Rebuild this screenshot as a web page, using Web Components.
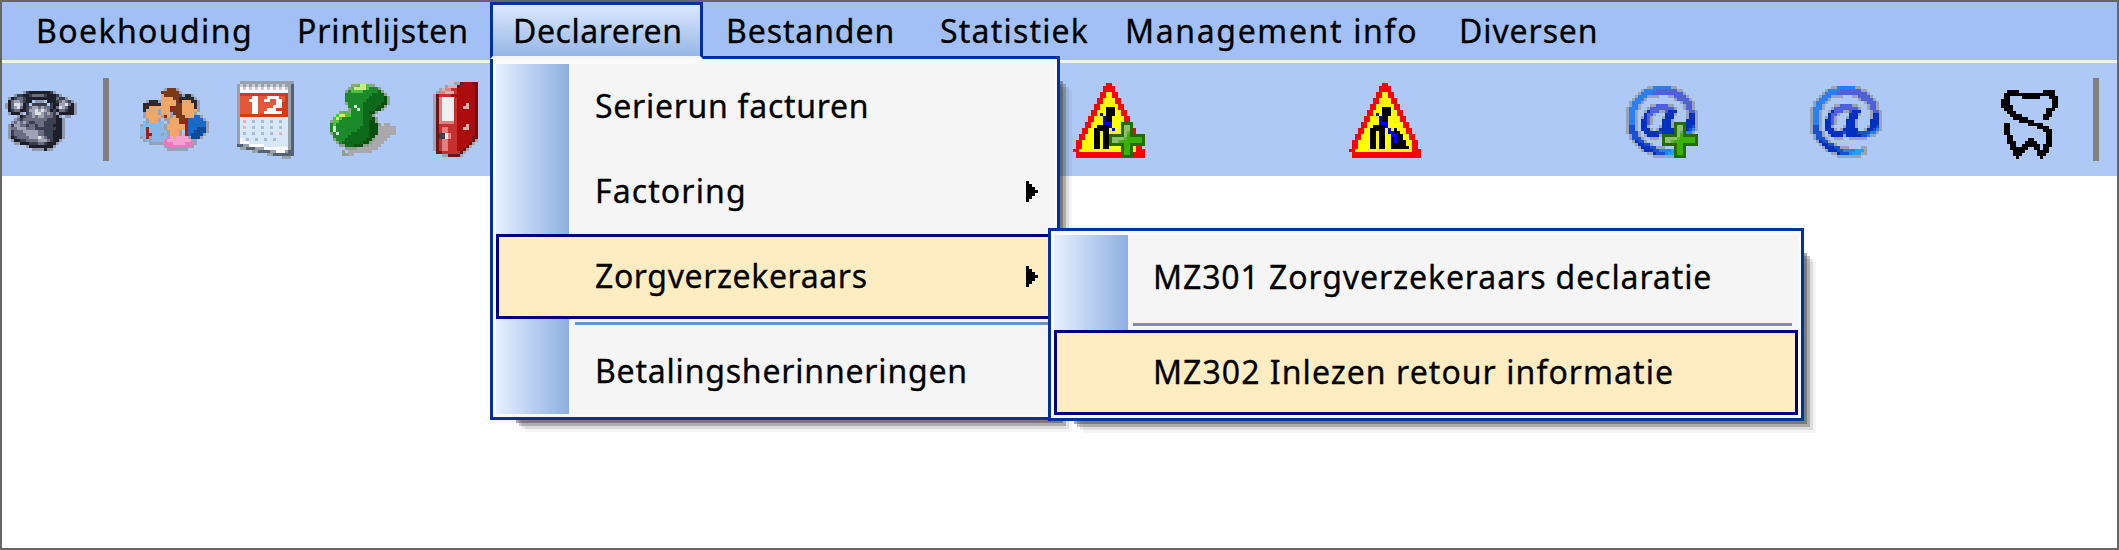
<!DOCTYPE html>
<html>
<head>
<meta charset="utf-8">
<title>Declareren</title>
<style>
  html, body { margin: 0; padding: 0; background: #fff; overflow: hidden; }
</style>
</head>
<body>
<app-window>
  <menu-bar>
    <menu-title style="width:261px;letter-spacing:1.4px">Boekhouding</menu-title>
    <menu-title style="width:216px;letter-spacing:.85px">Printlijsten</menu-title>
    <menu-title style="width:213px;letter-spacing:.55px" open>Declareren</menu-title>
    <menu-title style="width:214px;letter-spacing:.9px">Bestanden</menu-title>
    <menu-title style="width:185px;letter-spacing:1.2px">Statistiek</menu-title>
    <menu-title style="width:334px;letter-spacing:1.65px">Management info</menu-title>
    <menu-title style="width:200px;letter-spacing:.9px">Diversen</menu-title>
  </menu-bar>
  <tool-bar>
    <tool-btn style="width:78px;margin-top:3px"><pix-icon name="phone"></pix-icon></tool-btn>
    <tool-sep style="width:52px"></tool-sep>
    <tool-btn style="width:82px"><pix-icon name="people"></pix-icon></tool-btn>
    <tool-btn style="width:106px"><pix-icon name="calendar"></pix-icon></tool-btn>
    <tool-btn style="width:86px"><pix-icon name="pin"></pix-icon></tool-btn>
    <tool-btn style="width:98px"><pix-icon name="binder"></pix-icon></tool-btn>
    <tool-btn style="width:98px;margin:2px 0 0 556px"><pix-icon name="roadplus" plus></pix-icon></tool-btn>
    <tool-btn style="width:98px;margin:2px 0 0 178px"><pix-icon name="road"></pix-icon></tool-btn>
    <tool-btn style="width:98px;margin:4px 0 0 179px"><pix-icon name="at" plus></pix-icon></tool-btn>
    <tool-btn style="width:98px;margin:4px 0 0 86px"><pix-icon name="at"></pix-icon></tool-btn>
    <tool-btn style="width:98px;margin:10px 0 0 84px"><pix-icon name="tooth"></pix-icon></tool-btn>
    <tool-sep style="width:37px"></tool-sep>
  </tool-bar>

  <popup-menu style="left:488px;top:54px;width:570px" gutter="73">
    <menu-item style="margin-top:1px;letter-spacing:.7px">Serierun facturen</menu-item>
    <menu-item style="letter-spacing:1.1px" arrow>Factoring</menu-item>
    <menu-item style="letter-spacing:.6px" arrow active>Zorgverzekeraars</menu-item>
    <menu-sep></menu-sep>
    <menu-item style="letter-spacing:.8px">Betalingsherinneringen</menu-item>
  </popup-menu>

  <popup-menu style="left:1046px;top:226px;width:756px" gutter="74">
    <menu-item style="letter-spacing:.9px">MZ301 Zorgverzekeraars declaratie</menu-item>
    <menu-sep></menu-sep>
    <menu-item style="letter-spacing:1.05px" active>MZ302 Inlezen retour informatie</menu-item>
  </popup-menu>
</app-window>

<script>
const FONT = '"Noto Sans", "Open Sans", sans-serif';

const PLUS_PAL = { D: '#266a00', L: '#8cc070', G: '#3ab000', M: '#5fae3c' };
const PLUS = [
  '....DDDD....',
  '....DLLD....',
  '....DLLD....',
  '....DLMD....',
  'DDDDDLGDDDDD',
  'DLLLLMGGGGGD',
  'DLLMGGGGGGGD',
  'DDDDDGGDDDDD',
  '....DGGD....',
  '....DGGD....',
  '....DGGD....',
  '....DDDD....'
];

const ROAD_PAL = { r: '#ff0000', y: '#ffff00', k: '#000000', b: '#0000ff' };

const ICONS = {
  phone: {
    pal: { k: '#1c1e2a', d: '#3c3f50', m: '#6b6e80', l: '#a0a3b4', w: '#dcdee8', g: '#8f98ac' },
    rows: [
      '......gdkkkkkkkdg.......',
      '...gddkkdmmmmdkkkdg.....',
      '.gkdmmdkkkkkkkkkkmddg...',
      '.kmllmdkk.ggg.kkkdmlmdg.',
      'gkmwwlkd.ddddd.dkkllwmkg',
      'gkmlwmkdmllmlmmdkmwlmkkg',
      '.kdmmkkdllwlwlmkdkmmdkkg',
      '.gkkkg.dmlwwlmlmdgkkkkkg',
      '....gkdmmlmllmmmdkg.gg..',
      '...gmdmmmmmmmmdddkkg....',
      '..gmlmlmddmmmddddkkg....',
      '.gdllmmdmmdmmdddkkkg....',
      '.gmmlllmmmdddddddkkg....',
      '.gdmmmlllllmmdddkkkg....',
      '.gdmmmmllllmmdddkkkg....',
      '.gkdmmmmlllwlmddkkkg....',
      '..gkkddmmmmlllmdkkg.....',
      '...ggkkkdddmmdkkkg......',
      '.......gkkkkkkkkg.......',
      '.........ggggkgg........'
    ]
  },
  people: {
    pal: { s: '#f0a868', b: '#7a3a18', h: '#2a2a2a', B: '#1a6ac8', D: '#0c4a9a', L: '#88b8e8', p: '#e878c0', P: '#f8a0d0', r: '#a02018', g: '#98a2b4' },
    rows: [
      '.........gbbbg..........',
      '........bbbbbbg.........',
      '........sbbbbbbghhg.....',
      '........ssssbbhhhhhg....',
      '...ghhhgsssssbhssshhg...',
      '..hhhhhhsssssbbsssshg...',
      '..hhsssssssrbbbsssshg...',
      '..hssssgsssbbbbsssssg...',
      '..gssssgsssgbbbssssg....',
      '..gsssssgrsgsbbbsssBBg..',
      '...gsssg.ggsssbbrBBBBBg.',
      '..LgsssLL.gsssbrrBBBBBBg',
      '.gLLLLLLLgssssssrBBBBBBg',
      '.LLrLLLLLgssssssrBBBDDDg',
      '.LLrLLLLLLgsssg.rBBDDDDg',
      '.LLrrLLLgLgsssgPrBDDDDg.',
      '.gLrgLLLLLpPsPPPPgDDDg..',
      '..gLgLLLLpPPPPPPPPgg....',
      '....gggggpppPPPPpppg....',
      '.........gppppppppg.....',
      '..........ggggggg.......'
    ]
  },
  calendar: {
    pal: { e: '#55626f', g: '#98a2ae', t: '#c8ccd0', w: '#ffffff', r: '#d83818', R: '#e4573a', b: '#d8e8f8', c: '#a9bdd2', p: '#f0b0b0' },
    rows: [
      '.gggggggggggggggggg.',
      'gtgtgtgtgtgtgtgtgge.',
      'gwtwtwtwtwtwtwtwtge.',
      'gwwwwwwwwwwwwwwwwge.',
      'grrrrrrrrrrrrrrrrge.',
      'gRRRRwwRRRwwwwRRrge.',
      'gRRRwwwRRwwRRwwRrge.',
      'gRRRRwwRRRRRRwwrrge.',
      'gRRRRwwRRRRRwwwrrge.',
      'gRRRRwwRRRwwwrrrrge.',
      'gRRRRwwRRwwwwwwrrge.',
      'grrrrrrrrrrrrrrrrge.',
      'gbbbbbbbbbbbbbbbbge.',
      'gbpbbcbbcbbcbbcbbge.',
      'gbbbbbbbbbbbbbbbbge.',
      'gbpbbcbbcbbcbbcbbge.',
      'gbbbbbbbbbbbbbbbbge.',
      'gbcbbcbbcbbcbbpbbge.',
      'gbbbbbbbbbbbbbbbbge.',
      'gwbcbbcbbcbbcbbbbge.',
      'gwwwbbbbbbbbbbbbbge.',
      'eeggwwwwwbbbbbbbbge.',
      '.ggeeegggwwwwwwwwge.',
      '.....ggeeeeggwwwgee.',
      '..........ggeeeeeee.',
      '...............ggg..'
    ]
  },
  pin: {
    pal: { G: '#1a8a2a', D: '#0c6a1a', L: '#50c040', H: '#c8ec88', K: '#085010', t: '#d8ecd0', g: '#8fa08f', s: '#a9a9ad' },
    rows: [
      '.......ggLHHLgg.......',
      '......gLHHHHLGGGg.....',
      '.....gGLLLLGGGGGDg....',
      '.....GGGGGGGGGDDDDg...',
      '.....GGGGGGGGDDDDDKg..',
      '.....GGGGGGGDDDDDDKg..',
      '.....gGGGGGDDDDDDKKg..',
      '......GGtGGDDDDDKKg...',
      '......gGGtGDDDDKKg....',
      '...gLLgGGGGDDKKg......',
      '..LHHLLGGGGDDDg.......',
      '.LHLGGGGGGGDDDKg......',
      'gLLGGGGGGGGDDKKg......',
      'GLGGGGGGGGGDDKKKg.ss..',
      'GtGGGGGGGGDDDKKKssssss',
      'GtGGGGGGGDDDDKKKssssss',
      'gGtGGGGDDDDDDKKKssssss',
      '.GGGGGDDDDDDDKKsssss..',
      '.gGGGDDDDDDDKKgssss...',
      '..gGDDDDDDDKKgssss....',
      '...ggDDDKKKggssss.....',
      '.....ggggsssssss......',
      '....gkssssssss........',
      '....ggss..............'
    ]
  },
  binder: {
    pal: { R: '#ab0d0d', r: '#c83030', d: '#6e1414', p: '#e08080', w: '#f0f0f0', g: '#a0a4b0', t: '#d8b0b0', k: '#404048' },
    rows: [
      '.......ggdRRRdd',
      '....gtttdRRRRRd',
      '..gtpprrRRRRRRd',
      '.gpptttrRRRRRRd',
      'gdrrrrRRRRRRRRd',
      'gdpwwwwrRRRRRRd',
      'gdpwwwwrRRRRRRd',
      'gdpwwwwrRRRtRRd',
      'gdpwwwwrRRttRRd',
      'gdpwwwwrRRRRRRd',
      'gdpwwwwrRRRRRRd',
      'gdpwwwwrRRRRRRd',
      'gdpwwwwrRRRRRRd',
      'gdppppprRRRRRRd',
      'gdrrrrrrRRRtRRd',
      'gdrpprrrRRttRRd',
      'gdrpprrrRRRRRRd',
      'gdkkwprrRRRRRRd',
      'gdkkwprrRRRRRdd',
      'gdrpprrrRRRRRdg',
      'gdrpprrrRRRRdg.',
      'gdrpprrrRRRdg..',
      'gdrpprrrRRdg...',
      '.ddrrrrrrdg....',
      '...ggddddg.....'
    ]
  },
  road: {
    pal: ROAD_PAL,
    rows: [
      '...........rr...........',
      '..........rrrr..........',
      '..........rrrr..........',
      '.........rryyrr.........',
      '.........rryyrr.........',
      '........rryyyyrr........',
      '........rryyyyrr........',
      '.......rryyyyyyrr.......',
      '.......rryykkkyrr.......',
      '......rryyykkkyyrr......',
      '......rrybykkkyyrr......',
      '.....rryyybkkyyyyrr.....',
      '.....rryyybkkyyyyrr.....',
      '....rryyyybbbyyyyyrr....',
      '....rryykkkkbyyyyyrr....',
      '...rryykkkkkybykyyyrr...',
      '...rryykkykkybbkkyyrr...',
      '..rryyykkykkyybbkkyyrr..',
      '..rryyykkykkyykbkkyyrr..',
      '.rryyyykkykkyykbkkkyyrr.',
      '.rryyyykkykkyykkkkkyyrr.',
      '.rryyyykkykkyykkkkkkyrr.',
      'rryyyyyyyyyyyyyyyyyyyrrr',
      '.rrrrrrrrrrrrrrrrrrrrrrr',
      '.rrrrrrrrrrrrrrrrrrrrrrr'
    ]
  },
  roadplus: {
    pal: ROAD_PAL,
    rows: [
      '...........rr...........',
      '..........rrrr..........',
      '..........rrrr..........',
      '.........rryyrr.........',
      '.........rryyrr.........',
      '........rryyyyrr........',
      '........rryyyyrr........',
      '.......rryyyyyyrr.......',
      '.......rryykkkyrr.......',
      '......rryyykkkyyrr......',
      '......rrybykkkyyrr......',
      '.....rryyybkkyyyyrr.....',
      '.....rryyybkkyyyyrr.....',
      '....rryyyybbbyyyyyrr....',
      '....rryykkkkbyyyyyrr....',
      '...rryykkkkkybyyyyyrr...',
      '...rryykkykkyyyyyyyrr...',
      '..rryyykkykkyyyyyyyyrr..',
      '..rryyykkykkyyyyyyyyrr..',
      '.rryyyykkykkyyyyyyyyyrr.',
      '.rryyyykkykkyyyyyyyyyrr.',
      '.rryyyykkykkyyyyyyyyyrr.',
      'rryyyyyyyyyyyyyyyyyyyrrr',
      '.rrrrrrrrrrrrrrrrrrrrrrr',
      '.rrrrrrrrrrrrrrrrrrrrrrr'
    ]
  },
  at: {
    pal: { B: '#2a80f0', P: '#5060d8', b: '#1850d0', n: '#0030c0', c: '#20a0f8', g: '#9aa4b8' },
    rows: [
      '.......ggBBBBBBgg.......',
      '.....gBBBBPPPPPPPgg.....',
      '....gBBBBPPPPPPPPPPg....',
      '...gBBBgggg...ggPPPPg...',
      '..gBBBg.........gPPPPg..',
      '.gBBBg............gPPPg.',
      '.gBBg...ggPPPPgg...gPPg.',
      'gBBBg..gPPPPPPPPg..gPPg.',
      'gBBg..gnPPPggPnnn...gPPg',
      'gBBg..nPPg...nnng...gnng',
      'gBBg.gnPg...gnnn....gnng',
      'gBBg.nnPg...nnng....nnng',
      'gBBg.nnPg...nnng....nnng',
      'gbbg.nng...gnnng...gnnbg',
      'gbbg.nnng.gnnnnn..gnnbBg',
      'gbbbg.nnnnnbnnnnbbbbBBg.',
      '.gbbg.gnnnngnnnnnbbBgg..',
      '.gbbbg..ggg..gggggg.....',
      '..gnbbg.................',
      '...gnnbbg...............',
      '....gnnnbbggg....gg.....',
      '.....gnnnbbBBBBcccg.....',
      '.......ggnbbbBcccgg.....',
      '.........gggggggg.......'
    ]
  },
  tooth: {
    pal: { k: '#000000' },
    rows: [
      '...kkkk........kkkk.',
      '..kkkkkkkkkkkkkkkkk.',
      '..kk....kkkkkk...kkk',
      '.kkk..............kk',
      '.kkk..............kk',
      '.kkkk.............kk',
      '..kkk...........kkk.',
      '...kkk..........kk..',
      '....kkkk.......kkk..',
      '.....kkkkk.....kk...',
      '.......kkkkk........',
      '..kk......kkkkk.....',
      '..kk.........kkkk...',
      '..kk...........kkk..',
      '..kk............kk..',
      '...kk...........kk..',
      '...kk.....kk....kk..',
      '...kkk...kkkk...kk..',
      '....kk..kkkkkk.kkk..',
      '....kkkkkk..kk.kk...',
      '.....kkkk....kkkk...',
      '.....kkk.....kkk....',
      '......k.......k.....'
    ]
  }
};

// one rect per run of same coloured pixels
function pixelSvg(rows, pal, size) {
  const w = Math.max(...rows.map(r => r.length));
  let rects = '';
  rows.forEach((row, y) => {
    let x = 0;
    while (x < row.length) {
      const c = row[x];
      let end = x + 1;
      while (end < row.length && row[end] === c) end++;
      if (pal[c]) rects += `<rect x="${x}" y="${y}" width="${end - x}" height="1" fill="${pal[c]}"/>`;
      x = end;
    }
  });
  return `<svg xmlns="http://www.w3.org/2000/svg" width="${w * size}" height="${rows.length * size}" viewBox="0 0 ${w} ${rows.length}" shape-rendering="crispEdges">${rects}</svg>`;
}

class AppWindow extends HTMLElement {
  constructor() {
    super();
    this.attachShadow({ mode: 'open' });
    this.shadowRoot.innerHTML = `
      <style>
        :host {
          display: block;
          position: relative;
          box-sizing: border-box;
          width: 2119px;
          height: 550px;
          border: 2px solid #666;
          background: #fff;
          overflow: hidden;
          font-family: ${FONT};
          color: #000;
          -webkit-text-stroke: 0.3px #000;
        }
      </style>
      <slot></slot>
    `;
  }
}

class MenuBar extends HTMLElement {
  constructor() {
    super();
    this.attachShadow({ mode: 'open' });
    this.shadowRoot.innerHTML = `
      <style>
        :host {
          display: flex;
          align-items: flex-start;
          height: 58px;
          padding-left: 11px;
          background: #a2c0f5;
        }
      </style>
      <slot></slot>
    `;
  }
}

class MenuTitle extends HTMLElement {
  constructor() {
    super();
    this.attachShadow({ mode: 'open' });
    this.shadowRoot.innerHTML = `
      <style>
        :host {
          display: flex;
          align-items: center;
          box-sizing: border-box;
          flex: none;
          height: 57px;
          padding-left: 23px;
          white-space: nowrap;
          font-size: 32px;
        }
        :host([open]) {
          position: relative;
          z-index: 3;
          padding-left: 20px;
          border: 3px solid #00309c;
          border-bottom: 3px solid #f5f5f5;
          background: linear-gradient(#dbe8fd, #96b6e6);
        }
      </style>
      <slot></slot>
    `;
  }
}

class ToolBar extends HTMLElement {
  constructor() {
    super();
    this.attachShadow({ mode: 'open' });
    this.shadowRoot.innerHTML = `
      <style>
        :host {
          display: flex;
          align-items: center;
          height: 113px;
          border-top: 3px solid #f0f0f0;
          background: #aec9f6;
        }
      </style>
      <slot></slot>
    `;
  }
}

class ToolBtn extends HTMLElement {
  constructor() {
    super();
    this.attachShadow({ mode: 'open' });
    this.shadowRoot.innerHTML = `
      <style>
        :host {
          display: flex;
          flex: none;
          justify-content: center;
          align-items: center;
        }
      </style>
      <slot></slot>
    `;
  }
}

class ToolSep extends HTMLElement {
  constructor() {
    super();
    this.attachShadow({ mode: 'open' });
    this.shadowRoot.innerHTML = `
      <style>
        :host {
          display: flex;
          flex: none;
          justify-content: center;
        }
        div { width: 6px; height: 83px; background: #808080; }
      </style>
      <div></div>
    `;
  }
}

class PixIcon extends HTMLElement {
  constructor() {
    super();
    this.attachShadow({ mode: 'open' });
  }

  connectedCallback() {
    const icon = ICONS[this.getAttribute('name')];
    const plus = this.hasAttribute('plus')
      ? `<span class="plus">${pixelSvg(PLUS, PLUS_PAL, 3)}</span>`
      : '';
    this.shadowRoot.innerHTML = `
      <style>
        :host { display: block; position: relative; line-height: 0; }
        svg { display: block; }
        .plus { position: absolute; right: 0; bottom: 0; }
      </style>
      ${pixelSvg(icon.rows, icon.pal, 3)}
      ${plus}
    `;
  }
}

class PopupMenu extends HTMLElement {
  constructor() {
    super();
    this.attachShadow({ mode: 'open' });
  }

  connectedCallback() {
    const gutter = this.getAttribute('gutter') || 73;
    this.shadowRoot.innerHTML = `
      <style>
        :host {
          display: block;
          position: absolute;
          z-index: 2;
          box-sizing: border-box;
          border: 3px solid #00309c;
          padding: 4px 3px 3px;
          background: #f9f9f9;
        }
        .shadow {
          position: absolute;
          z-index: -1;
          left: 20px;
          top: 19px;
          right: -3px;
          bottom: -3px;
          box-shadow:
            3px 3px 0 rgba(60, 60, 60, 0.45),
            6px 6px 0 rgba(60, 60, 60, 0.3),
            9px 9px 0 rgba(60, 60, 60, 0.12),
            12px 12px 0 rgba(60, 60, 60, 0.05);
        }
        .body {
          background: linear-gradient(to right, #e6f0fe, #8eafe2) no-repeat 0 0 / ${gutter}px 100%, #f5f5f5;
        }
      </style>
      <div class="shadow"></div>
      <div class="body"><slot></slot></div>
    `;
  }
}

class MenuItem extends HTMLElement {
  constructor() {
    super();
    this.attachShadow({ mode: 'open' });
  }

  connectedCallback() {
    const arrow = this.hasAttribute('arrow')
      ? `<svg class="arrow" width="12" height="22" viewBox="0 0 4 7" shape-rendering="crispEdges"><path d="M0 0h1v1h1v1h1v1h1v1h-1v1h-1v1h-1v1h-1z" fill="#000" stroke="none"/></svg>`
      : '';
    this.shadowRoot.innerHTML = `
      <style>
        :host {
          display: flex;
          align-items: center;
          justify-content: space-between;
          box-sizing: border-box;
          height: 85px;
          padding: 0 16px 2px 99px;
          white-space: nowrap;
          font-size: 32px;
        }
        :host([active]) {
          padding: 0 13px 2px 96px;
          border: 3px solid #000080;
          background: #feecc2;
        }
      </style>
      <span><slot></slot></span>
      ${arrow}
    `;
  }
}

class MenuSep extends HTMLElement {
  constructor() {
    super();
    this.attachShadow({ mode: 'open' });
    this.shadowRoot.innerHTML = `
      <style>
        :host {
          display: block;
          height: 3px;
          margin: 3px 6px 4px 79px;
          background: #7090cc;
        }
      </style>
    `;
  }
}

customElements.define('app-window', AppWindow);
customElements.define('menu-bar', MenuBar);
customElements.define('menu-title', MenuTitle);
customElements.define('tool-bar', ToolBar);
customElements.define('tool-btn', ToolBtn);
customElements.define('tool-sep', ToolSep);
customElements.define('pix-icon', PixIcon);
customElements.define('popup-menu', PopupMenu);
customElements.define('menu-item', MenuItem);
customElements.define('menu-sep', MenuSep);
</script>
</body>
</html>
